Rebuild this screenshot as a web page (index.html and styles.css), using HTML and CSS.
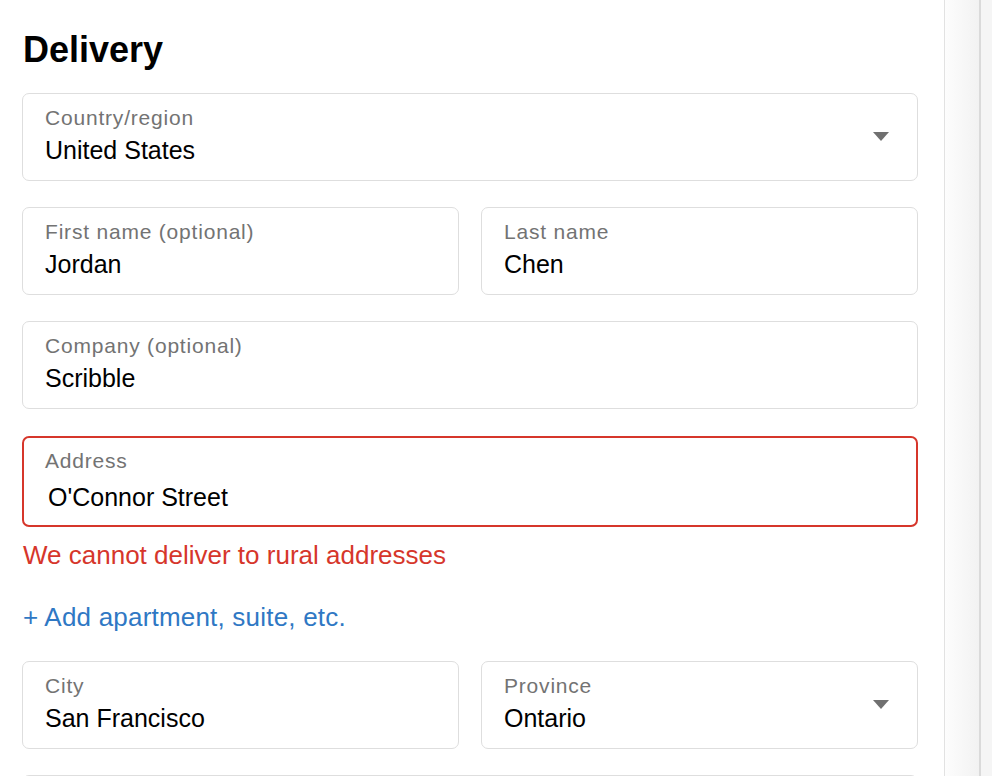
FILE: index.html
```html
<!DOCTYPE html>
<html lang="en">
<head>
<meta charset="utf-8">
<title>Delivery</title>
<link rel="stylesheet" href="styles.css">
</head>
<body>
<div class="page">
  <main class="main">
    <h2 class="title">Delivery</h2>
    <div class="form">
      <div class="field select">
        <span class="label">Country/region</span>
        <span class="value">United States</span>
        <span class="caret"></span>
      </div>
      <div class="row">
        <div class="field">
          <span class="label">First name (optional)</span>
          <span class="value">Jordan</span>
        </div>
        <div class="field">
          <span class="label">Last name</span>
          <span class="value">Chen</span>
        </div>
      </div>
      <div class="field">
        <span class="label">Company (optional)</span>
        <span class="value">Scribble</span>
      </div>
      <div class="address-group">
        <div class="field error">
          <span class="label">Address</span>
          <span class="value">O'Connor Street</span>
        </div>
        <p class="error-text">We cannot deliver to rural addresses</p>
        <a class="add-link" href="#">+ Add apartment, suite, etc.</a>
      </div>
      <div class="row">
        <div class="field">
          <span class="label">City</span>
          <span class="value">San Francisco</span>
        </div>
        <div class="field select">
          <span class="label">Province</span>
          <span class="value">Ontario</span>
          <span class="caret"></span>
        </div>
      </div>
      <div class="field"></div>
    </div>
  </main>
  <aside class="side">
    <div class="side-shade"></div>
    <div class="side-rest"></div>
  </aside>
</div>
</body>
</html>
```

FILE: styles.css
```css
html, body {
  margin: 0;
  padding: 0;
  background: #fff;
  height: 100%;
  overflow: hidden;
}
body {
  font-family: "Liberation Sans", Arial, Helvetica, sans-serif;
  color: #000;
}
.page {
  display: flex;
  height: 776px;
  overflow: hidden;
}
.main {
  width: 944px;
  flex: none;
  box-sizing: border-box;
  padding: 28px 26px 0 22px;
}
.title {
  margin: 0 0 21px 1px;
  font-size: 36px;
  line-height: 44px;
  font-weight: 700;
  color: #000;
}
.form {
  display: flex;
  flex-direction: column;
  gap: 26px;
}
.row {
  display: grid;
  grid-template-columns: 1fr 1fr;
  gap: 22px;
}
.field {
  position: relative;
  display: flex;
  flex-direction: column;
  box-sizing: border-box;
  height: 88px;
  border: 1px solid #dedede;
  border-radius: 7px;
  padding: 11px 22px 0 22px;
  background: #fff;
}
.label {
  font-size: 21px;
  line-height: 26px;
  color: #737373;
  letter-spacing: 0.8px;
}
.value {
  margin-top: 4px;
  font-size: 25px;
  line-height: 30px;
  color: #000;
}
.select .caret {
  position: absolute;
  right: 28px;
  top: 50%;
  margin-top: -5px;
  width: 0;
  height: 0;
  border-left: 8px solid transparent;
  border-right: 8px solid transparent;
  border-top: 9px solid #707070;
}
.address-group {
  display: flex;
  flex-direction: column;
  margin-top: 1px;
}
.field.error {
  height: 91px;
  border: 2px solid #d6362b;
  border-radius: 7px;
  padding: 10px 22px 0 21px;
}
.field.error .value {
  margin-top: 8px;
  padding-left: 3px;
}
.error-text {
  margin: 12px 0 0 1px;
  font-size: 26px;
  line-height: 32px;
  color: #d6362b;
}
.add-link {
  margin: 30px 0 2px 1px;
  font-size: 26px;
  line-height: 32px;
  letter-spacing: 0.2px;
  color: #2f78c4;
  text-decoration: none;
  align-self: flex-start;
}
.side {
  flex: 1;
  display: flex;
  border-left: 1px solid #e2e2e2;
}
.side-shade {
  width: 34px;
  background: linear-gradient(to right, #fdfdfd, #f2f2f2);
  border-right: 2px solid #dadada;
}
.side-rest {
  flex: 1;
  background: #f5f5f5;
}
```
